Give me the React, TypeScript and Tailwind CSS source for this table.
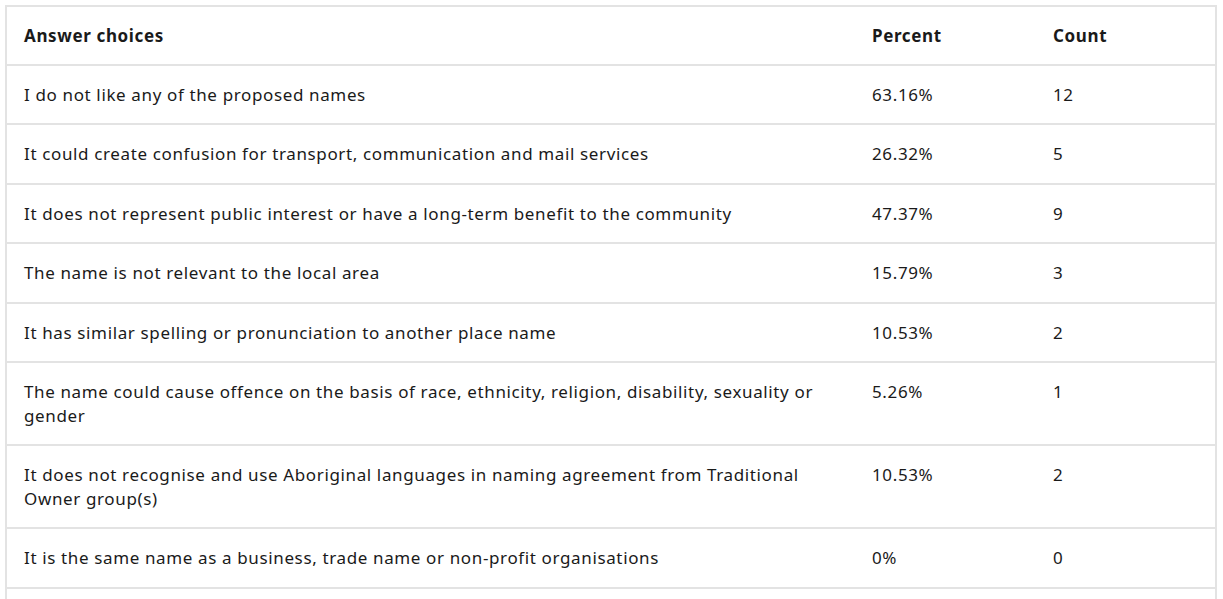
import React from "react";

const rows: [string, string, string][] = [
  ["I do not like any of the proposed names", "63.16%", "12"],
  ["It could create confusion for transport, communication and mail services", "26.32%", "5"],
  ["It does not represent public interest or have a long-term benefit to the community", "47.37%", "9"],
  ["The name is not relevant to the local area", "15.79%", "3"],
  ["It has similar spelling or pronunciation to another place name", "10.53%", "2"],
  ["The name could cause offence on the basis of race, ethnicity, religion, disability, sexuality or gender", "5.26%", "1"],
  ["It does not recognise and use Aboriginal languages in naming agreement from Traditional Owner group(s)", "10.53%", "2"],
  ["It is the same name as a business, trade name or non-profit organisations", "0%", "0"],
];

export default function App() {
  return (
    <div className="bg-white h-screen overflow-hidden pt-[5px] pl-[5px]" style={{ fontFamily: '"Noto Sans", "Open Sans", sans-serif' }}>
      <div className="w-[1212px] border-x-2 border-t-2 border-[#e3e3e3] text-[17px] leading-[23.5px] tracking-[0.63px] text-[#1a1a1a]">
        <div className="flex border-b-2 border-[#e3e3e3] font-bold">
          <div className="w-[849px] pl-[17px] pr-4 pt-[16.5px] pb-[17px]">Answer choices</div>
          <div className="w-[181px] px-4 pt-[16.5px] pb-[17px]">Percent</div>
          <div className="flex-1 px-4 pt-[16.5px] pb-[17px]">Count</div>
        </div>
        {rows.map((r, i) => (
          <div key={i} className="flex border-b-2 border-[#e3e3e3]">
            <div className="w-[849px] pl-[17px] pr-4 pt-[16.7px] pb-[17.3px]">{r[0]}</div>
            <div className="w-[181px] px-4 pt-[16.7px] pb-[17.3px]">{r[1]}</div>
            <div className="flex-1 px-4 pt-[16.7px] pb-[17.3px]">{r[2]}</div>
          </div>
        ))}
        <div className="h-[40px]" />
      </div>
    </div>
  );
}
